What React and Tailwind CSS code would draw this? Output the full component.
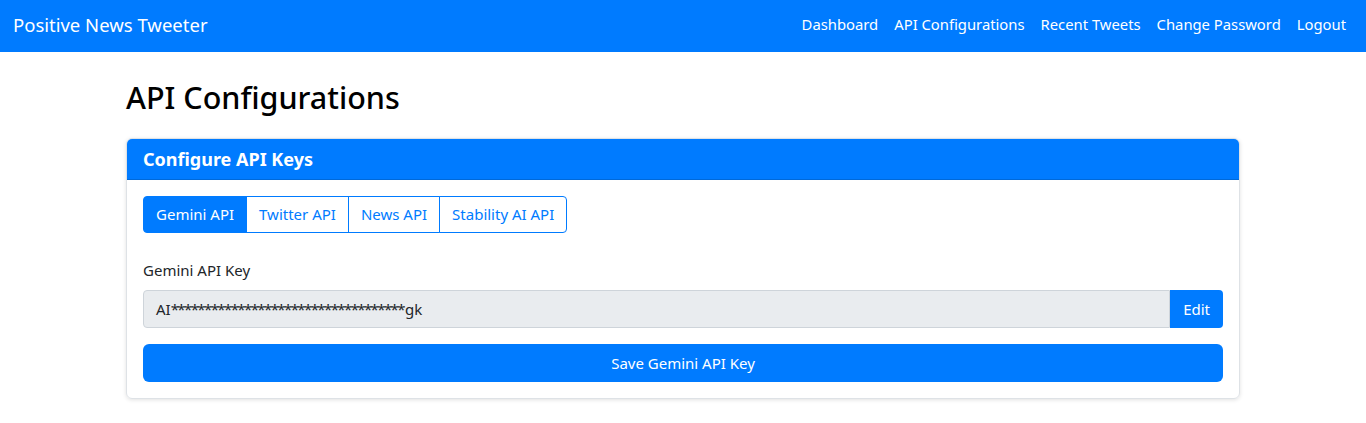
import { useState } from 'react'

const navLinks = ['Dashboard', 'API Configurations', 'Recent Tweets', 'Change Password', 'Logout']
const tabs = ['Gemini API', 'Twitter API', 'News API', 'Stability AI API']

export default function App() {
  const [active, setActive] = useState(0)

  return (
    <div className="min-h-[423px] bg-white text-[#212529]" style={{ fontFamily: '"Noto Sans", "Open Sans", sans-serif' }}>
      <nav className="flex h-[52px] items-center justify-between bg-[#007bff] px-[13px] pb-[3px]">
        <a className="text-[18.5px] text-white">Positive News Tweeter</a>
        <div className="flex items-center gap-[16px] pr-[7px]">
          {navLinks.map((link) => (
            <a key={link} className="text-[14.8px] text-white">
              {link}
            </a>
          ))}
        </div>
      </nav>

      <div className="mx-auto w-[1114px]">
        <h2 className="mt-[25px] mb-[21px] text-[30.5px] font-medium leading-[40px] text-black">API Configurations</h2>

        <div className="overflow-hidden rounded-[6px] border border-[#dee2e6] shadow-[0_1px_4px_rgba(0,0,0,0.12)]">
          <div className="flex h-[41px] items-center border-b border-[#0069d9] bg-[#007bff] px-[16px]">
            <h5 className="text-[18px] font-bold text-white">Configure API Keys</h5>
          </div>

          <div className="p-[16px]">
            <div className="inline-flex">
              {tabs.map((tab, i) => (
                <button
                  key={tab}
                  onClick={() => setActive(i)}
                  className={`h-[37px] border border-[#007bff] px-[12px] text-[15px] ${
                    i === active ? 'bg-[#007bff] text-white' : 'bg-white text-[#007bff]'
                  } ${i === 0 ? 'rounded-l-[4px]' : '-ml-px'} ${i === tabs.length - 1 ? 'rounded-r-[4px]' : ''}`}
                >
                  {tab}
                </button>
              ))}
            </div>

            <label className="mt-[26px] mb-[9px] block text-[15px] leading-[22px]">Gemini API Key</label>
            <div className="flex h-[38px]">
              <div className="flex flex-1 items-center rounded-l-[4px] border border-[#ced4da] bg-[#e9ecef] px-[12px] text-[15px]">
                AI<span className="tracking-[-1.6px]">{'*'.repeat(35)}</span>
                <span className="ml-[1px]">gk</span>
              </div>
              <button className="rounded-r-[4px] bg-[#007bff] px-[13px] text-[15px] text-white">Edit</button>
            </div>

            <button className="mt-[16px] h-[38px] w-full rounded-[6px] bg-[#007bff] text-[15px] text-white">
              Save Gemini API Key
            </button>
          </div>
        </div>
      </div>
    </div>
  )
}
